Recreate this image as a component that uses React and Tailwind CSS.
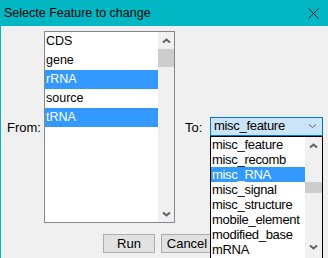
import React from "react";

const fromItems = [
  { name: "CDS" },
  { name: "gene" },
  { name: "rRNA", sel: true },
  { name: "source" },
  { name: "tRNA", sel: true },
];

const toItems = [
  "misc_feature",
  "misc_recomb",
  "misc_RNA",
  "misc_signal",
  "misc_structure",
  "mobile_element",
  "modified_base",
  "mRNA",
];

const font = { fontFamily: '"Liberation Sans", Arial, sans-serif' };

const Chevron = ({ down, thin }) => (
  <svg width="9" height="6" viewBox="0 0 9 6" className="block">
    <path
      d={down ? "M1 1.5 L4.5 4.5 L8 1.5" : "M1 4.5 L4.5 1.5 L8 4.5"}
      fill="none"
      stroke="#606060"
      strokeWidth={thin ? 1 : 2}
    />
  </svg>
);

const App = () => {
  return (
    <div
      className="relative w-[328px] h-[258px] overflow-hidden bg-[#f0f0f0] flex flex-col text-[12px] text-black"
      style={font}
    >
      {/* Title bar */}
      <div className="h-[26px] bg-[#00b7c3] flex items-center justify-between pl-[4px] pr-[9px] shrink-0">
        <span className="text-[12.5px] text-black">Selecte Feature to change</span>
        <svg width="11" height="11" viewBox="0 0 11 11">
          <path d="M0.5 0.5 L10.5 10.5 M10.5 0.5 L0.5 10.5" stroke="#1a1a1a" strokeWidth="1" />
        </svg>
      </div>

      <div className="flex-1 border-l border-[#00b7c3] flex flex-col">
        <div className="flex items-center pt-[5px]">
          <div className="w-[37px] ml-[6px] pt-[2px] text-[13px]">From:</div>
          {/* From list */}
          <div className="w-[131px] h-[192px] border border-[#828790] bg-white flex">
            <div className="flex-1 flex flex-col">
              {fromItems.map(item => (
                <div
                  key={item.name}
                  className={`h-[19px] flex items-center pl-[1px] text-[12.5px] ${
                    item.sel ? "bg-[#3399ff] text-white" : ""
                  }`}
                >
                  {item.name}
                </div>
              ))}
            </div>
            <div className="w-[16px] bg-[#f0f0f0] flex flex-col items-center">
              <div className="h-[17px] flex items-center justify-center">
                <Chevron />
              </div>
              <div className="w-full h-[18px] bg-[#cdcdcd]" />
              <div className="flex-1" />
              <div className="h-[17px] flex items-center justify-center">
                <Chevron down />
              </div>
            </div>
          </div>

          <div className="w-[25px] ml-[10px] pt-[2px] text-[13px]">To:</div>
          {/* Combo */}
          <div className="w-[113px] h-[19px] border border-[#0078d7] bg-[#cce4f7] flex items-center justify-between pl-[3px] pr-[5px] -mt-[2px] text-[13px] tracking-[-0.3px]">
            <span>misc_feature</span>
            <Chevron down thin />
          </div>
        </div>

        <div className="flex gap-[6px] ml-[102px] mt-[11px] text-[13px]">
          <button className="w-[52px] h-[19px] bg-[#e1e1e1] border border-[#adadad] flex items-center justify-center">
            Run
          </button>
          <button className="w-[52px] h-[19px] bg-[#e1e1e1] border border-[#adadad] flex items-center justify-center">
            Cancel
          </button>
        </div>
      </div>

      {/* Dropdown list */}
      <div className="absolute left-[210px] top-[136px] w-[113px] h-[124px] border border-black bg-white flex text-[13px] tracking-[-0.3px]">
        <div className="flex-1 flex flex-col overflow-hidden">
          {toItems.map(name => (
            <div
              key={name}
              className={`h-[15px] shrink-0 flex items-center pl-[1px] whitespace-nowrap ${
                name === "misc_RNA" ? "bg-[#3399ff] text-white" : ""
              }`}
            >
              {name}
            </div>
          ))}
        </div>
        <div className="w-[17px] bg-[#f0f0f0] flex flex-col items-center">
          <div className="h-[17px] flex items-center justify-center">
            <Chevron />
          </div>
          <div className="h-[28px]" />
          <div className="w-full h-[11px] bg-[#cdcdcd]" />
          <div className="flex-1" />
          <div className="h-[17px] flex items-center justify-center mb-[4px]">
            <Chevron down />
          </div>
        </div>
      </div>
    </div>
  );
};

export default App;
